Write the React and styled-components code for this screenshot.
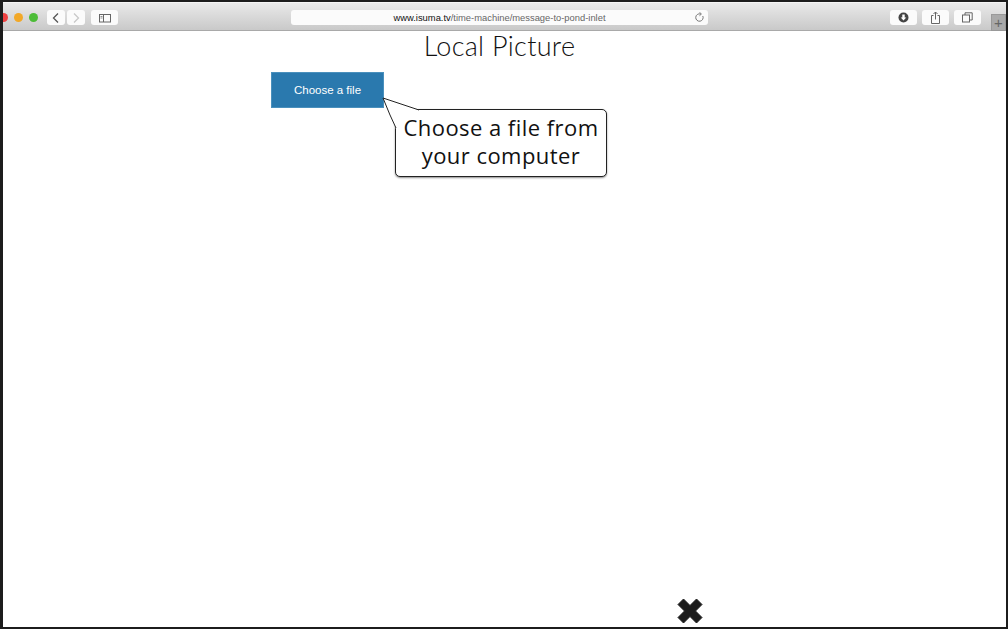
import React from "react"
import styled, { createGlobalStyle } from "styled-components"

const GlobalStyle = createGlobalStyle`
  html, body {
    margin: 0;
    padding: 0;
    background: #fff;
  }
`

const Frame = styled.div`
  width: 1008px;
  height: 629px;
  box-sizing: border-box;
  border: solid #1c1c1c;
  border-width: 2px 2px 2px 3px;
  background: #fff;
  display: flex;
  flex-direction: column;
  overflow: hidden;
  font-family: "Liberation Sans", Arial, sans-serif;
`

const Toolbar = styled.div`
  height: 29px;
  flex: none;
  box-sizing: border-box;
  display: flex;
  align-items: center;
  padding: 2px 0 0 0;
  background: linear-gradient(#e9e9e9, #c9c9c9);
  border-top: 1px solid #f4f4f4;
  border-bottom: 1px solid #a9a9a9;
  position: relative;
`

const Lights = styled.div`
  display: flex;
  gap: 6px;
  margin-left: -4px;
  margin-right: 9px;
`

const Light = styled.span`
  width: 9px;
  height: 9px;
  border-radius: 50%;
  background: ${(p) => p.$color};
`

const ToolButton = styled.div`
  width: ${(p) => p.$width || 27}px;
  height: 15px;
  margin-left: ${(p) => p.$gap || 0}px;
  background: #fbfbfb;
  border-radius: 3px;
  display: flex;
  align-items: center;
  justify-content: center;
  color: ${(p) => p.$color || "#555"};
`

const AddressBar = styled.div`
  width: 417px;
  height: 15px;
  margin-left: 173px;
  background: #fbfbfb;
  border-radius: 3px;
  display: flex;
  align-items: center;
  justify-content: center;
  position: relative;
  font-size: 9.4px;
  color: #666;
`

const Domain = styled.span`
  color: #111;
`

const Reload = styled.div`
  position: absolute;
  right: 3px;
  top: 2px;
  display: flex;
  color: #777;
`

const RightTools = styled.div`
  display: flex;
  margin-left: 182px;
`

const NewTab = styled.div`
  position: absolute;
  right: 0;
  bottom: -1px;
  width: 15px;
  height: 17px;
  background: #a9a9a9;
  border: 1px solid #999;
  box-sizing: border-box;
  color: #666;
  font-size: 15px;
  line-height: 15px;
  text-align: center;
`

const Content = styled.main`
  flex: 1;
  display: flex;
  flex-direction: column;
  position: relative;
`

const Title = styled.h1`
  margin: 0;
  padding-right: 10px;
  height: 41px;
  text-align: center;
  font-family: Lato, sans-serif;
  font-weight: 300;
  font-size: 27px;
  line-height: 30px;
  letter-spacing: 0.3px;
  color: #111;
`

const ChooseButton = styled.button`
  width: 113px;
  height: 36px;
  margin-left: 268px;
  padding: 0;
  border: 1px solid #4a90bd;
  background: #2a79ae;
  color: #fff;
  font-family: "Liberation Sans", Arial, sans-serif;
  font-size: 11.5px;
`

const Callout = styled.div`
  position: absolute;
  left: 392px;
  top: 78px;
  width: 212px;
  height: 68px;
  box-sizing: border-box;
  border: 1px solid #222;
  border-radius: 5px;
  background: #fff;
  box-shadow: 0 1px 2px rgba(0, 0, 0, 0.45);
  padding-top: 3px;
  text-align: center;
  font-family: "Open Sans", sans-serif;
  font-size: 22px;
  line-height: 28px;
  letter-spacing: 0.45px;
  color: #111;
`

const Tail = styled.svg`
  position: absolute;
  left: 379px;
  top: 66px;
`

const CloseMark = styled.svg`
  margin-top: auto;
  margin-left: 674px;
  margin-bottom: 3px;
  flex: none;
`

const App = () => (
  <Frame>
    <GlobalStyle />
    <Toolbar>
      <Lights>
        <Light $color="#ee4040" />
        <Light $color="#f2a827" />
        <Light $color="#4cbc37" />
      </Lights>
      <ToolButton $width={18}>
        <svg width="10" height="12" viewBox="0 0 10 12" fill="none" stroke="#555" strokeWidth="1.3">
          <path d="M7 1.5 2.5 6 7 10.5" />
        </svg>
      </ToolButton>
      <ToolButton $width={18} $gap={2}>
        <svg width="10" height="12" viewBox="0 0 10 12" fill="none" stroke="#c8c8c8" strokeWidth="1.3">
          <path d="M3 1.5 7.5 6 3 10.5" />
        </svg>
      </ToolButton>
      <ToolButton $gap={6}>
        <svg width="12" height="10" viewBox="0 0 12 10" fill="none" stroke="#666" strokeWidth="1">
          <rect x="0.5" y="1.5" width="11" height="7.5" />
          <path d="M4.5 1.5V9" />
          <path d="M1.5 3.5h2M1.5 5h2" strokeWidth="0.7" />
        </svg>
      </ToolButton>
      <AddressBar>
        <span>
          <Domain>www.isuma.tv</Domain>/time-machine/message-to-pond-inlet
        </span>
        <Reload>
          <svg width="11" height="11" viewBox="0 0 11 11" fill="none" stroke="#777" strokeWidth="1">
            <path d="M8.8 4A3.7 3.7 0 1 1 6.5 2" />
            <path d="M5.5 0.3 7.4 2 5.5 3.7" />
          </svg>
        </Reload>
      </AddressBar>
      <RightTools>
        <ToolButton>
          <svg width="11" height="11" viewBox="0 0 11 11">
            <circle cx="5.5" cy="5.5" r="5" fill="#444" />
            <path d="M4.3 2.5h2.4v3h1.6L5.5 8.6 2.7 5.5h1.6z" fill="#fff" />
          </svg>
        </ToolButton>
        <ToolButton $gap={5}>
          <svg width="11" height="13" viewBox="0 0 11 13" fill="none" stroke="#666" strokeWidth="1">
            <path d="M3.5 4.5h-2v8h8v-8h-2" />
            <path d="M5.5 8.5V1M3.5 3l2-2 2 2" />
          </svg>
        </ToolButton>
        <ToolButton $gap={5}>
          <svg width="11" height="11" viewBox="0 0 11 11" fill="none" stroke="#666" strokeWidth="1">
            <rect x="0.5" y="3" width="7" height="7" />
            <path d="M3 3V0.8h7.2V8H7.5" />
          </svg>
        </ToolButton>
      </RightTools>
      <NewTab>+</NewTab>
    </Toolbar>
    <Content>
      <Title>Local Picture</Title>
      <ChooseButton>Choose a file</ChooseButton>
      <Callout>
        Choose a file from
        <br />
        your computer
      </Callout>
      <Tail width="44" height="40" viewBox="0 0 44 40" fill="none">
        <path d="M1 1 37 13 L14 32 Z" fill="#fff" />
        <path d="M14 31 8 18 1 1 37 13" stroke="#222" strokeWidth="1" />
      </Tail>
      <CloseMark width="26" height="26" viewBox="0 0 26 26">
        <path
          d="M1 6.5 6.5 1 13 7.5 19.5 1 25 6.5 18.5 13 25 19.5 19.5 25 13 18.5 6.5 25 1 19.5 7.5 13Z"
          fill="#1c1c1c"
          stroke="#1c1c1c"
          strokeLinejoin="round"
          strokeWidth="1"
        />
      </CloseMark>
    </Content>
  </Frame>
)

export default App
